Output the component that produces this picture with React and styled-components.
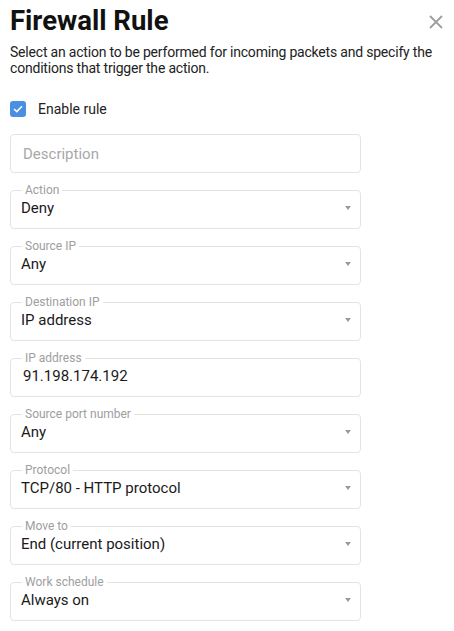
import React from "react";
import styled, { createGlobalStyle } from "styled-components";

const GlobalStyle = createGlobalStyle`
  html, body {
    margin: 0;
    padding: 0;
    background: #ffffff;
    font-family: Roboto, "Liberation Sans", Arial, sans-serif;
    color: #212121;
  }
`;

const Panel = styled.div`
  width: 454px;
  box-sizing: border-box;
  padding: 4px 0 0 10px;
`;

const Header = styled.div`
  display: flex;
  justify-content: space-between;
  align-items: flex-start;
`;

const Title = styled.h1`
  margin: 0;
  font-size: 27.5px;
  line-height: 34px;
  font-weight: 700;
  color: #111;
`;

const CloseButton = styled.button`
  border: none;
  background: none;
  padding: 0;
  margin: 10px 10px 0 0;
  width: 16px;
  height: 16px;
  display: flex;
  align-items: center;
  justify-content: center;
  cursor: pointer;
`;

const Intro = styled.p`
  margin: 6px 0 0;
  font-size: 14px;
  letter-spacing: -0.2px;
  line-height: 16px;
  color: #222;
`;

const CheckRow = styled.label`
  display: flex;
  align-items: center;
  gap: 12px;
  height: 16px;
  margin-top: 25px;
  font-size: 14px;
  color: #222;
`;

const Box = styled.span`
  width: 16px;
  height: 16px;
  border-radius: 3px;
  background: ${(p) => (p.checked ? "#4a8fe1" : "#fff")};
  display: flex;
  align-items: center;
  justify-content: center;
`;

const Form = styled.div`
  width: 351px;
  display: flex;
  flex-direction: column;
  gap: 10px;
  margin-top: 17px;
`;

const TextInput = styled.div`
  height: 39px;
  box-sizing: border-box;
  border: 1px solid #e3e3e3;
  border-radius: 4px;
  padding: 0 12px;
  display: flex;
  align-items: center;
  font-size: 15px;
  color: #a8a8a8;
`;

const Field = styled.fieldset`
  margin: 0;
  border: 1px solid #e3e3e3;
  border-radius: 4px;
  padding: 0 10px 9px;
  min-width: 0;
`;

const Legend = styled.legend`
  font-size: 12px;
  line-height: 14px;
  color: #9e9e9e;
  padding: 0 3px;
  margin-left: 1px;
`;

const Value = styled.div`
  display: flex;
  align-items: center;
  justify-content: space-between;
  height: 22px;
  line-height: 22px;
  font-size: 15px;
  color: #1a1a1a;
  padding-left: ${(p) => (p.inset ? "2px" : "0")};
`;

const Arrow = styled.span`
  width: 0;
  height: 0;
  border-left: 3px solid transparent;
  border-right: 3px solid transparent;
  border-top: 4px solid #9a9a9a;
  margin-right: -1px;
`;

const fields = [
  { label: "Action", value: "Deny", select: true },
  { label: "Source IP", value: "Any", select: true },
  { label: "Destination IP", value: "IP address", select: true },
  { label: "IP address", value: "91.198.174.192", select: false },
  { label: "Source port number", value: "Any", select: true },
  { label: "Protocol", value: "TCP/80 - HTTP protocol", select: true },
  { label: "Move to", value: "End (current position)", select: true },
  { label: "Work schedule", value: "Always on", select: true },
];

export default function App() {
  return (
    <>
      <GlobalStyle />
      <Panel>
        <Header>
          <Title>Firewall Rule</Title>
          <CloseButton aria-label="Close">
            <svg width="14" height="14" viewBox="0 0 14 14">
              <path d="M1 1L13 13M13 1L1 13" stroke="#9e9e9e" strokeWidth="1.8" />
            </svg>
          </CloseButton>
        </Header>
        <Intro>
          Select an action to be performed for incoming packets and specify the
          conditions that trigger the action.
        </Intro>
        <CheckRow>
          <Box checked>
            <svg width="10" height="8" viewBox="0 0 10 8">
              <path d="M1 4L3.8 6.6L9 1.2" fill="none" stroke="#fff" strokeWidth="1.5" />
            </svg>
          </Box>
          Enable rule
        </CheckRow>
        <Form>
          <TextInput>Description</TextInput>
          {fields.map((f) => (
            <Field key={f.label}>
              <Legend>{f.label}</Legend>
              <Value inset={!f.select}>
                <span>{f.value}</span>
                {f.select && <Arrow />}
              </Value>
            </Field>
          ))}
        </Form>
      </Panel>
    </>
  );
}
